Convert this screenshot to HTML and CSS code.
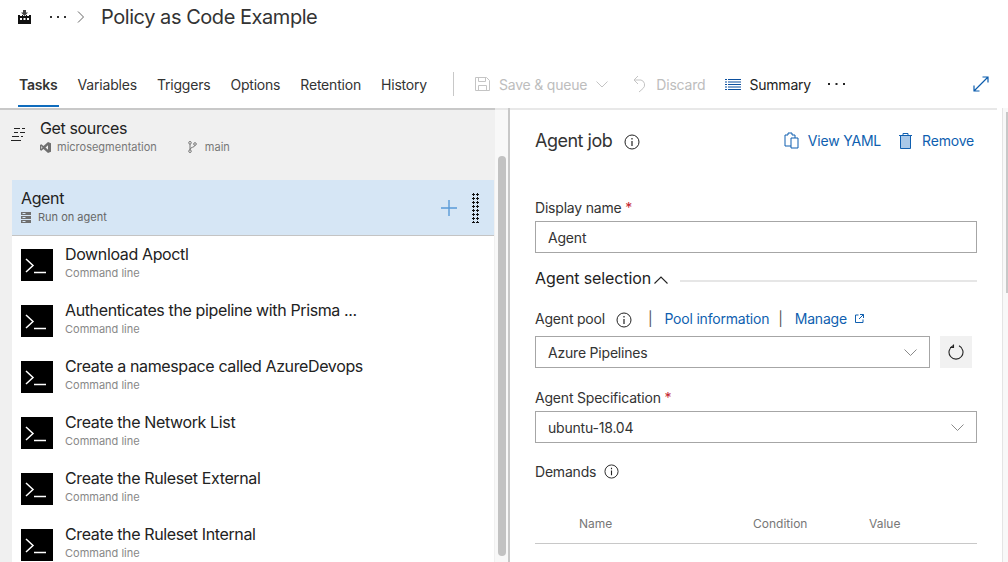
FILE: index.html
```html
<!DOCTYPE html>
<html lang="en">
<head>
    <meta charset="UTF-8">
    <title>Policy as Code Example</title>
    <link rel="stylesheet" href="styles.css">
</head>
<body>

<div class="crumbs">
    <svg class="org-icon" width="13" height="14" viewBox="0 0 13 14"><path d="M5 0h3v2.500h2L6.500 6 3 2.500h2z" fill="#444"/><path d="M0 5h2v1h2V5h1v1h3V5h1v1h2V5h2v9H0z" fill="#111"/><path d="M2 8h2v2H2zM5.500 8h2v2h-2zM9 8h2v2H9z" fill="#fff"/></svg>
    <svg class="crumb-dots" width="16" height="2" viewBox="0 0 16 2"><path d="M0 0h2v2H0zM7 0h2v2H7zM14 0h2v2h-2z" fill="#333"/></svg>
    <svg class="crumb-arrow" width="7" height="12" viewBox="0 0 7 12"><path d="M1 .5L6.500 6 1 11.500" fill="none" stroke="#666"/></svg>
    <h1 class="title">Policy as Code Example</h1>
</div>

<div class="tabbar">
    <a class="tab active">Tasks</a>
    <a class="tab">Variables</a>
    <a class="tab">Triggers</a>
    <a class="tab">Options</a>
    <a class="tab">Retention</a>
    <a class="tab">History</a>
    <div class="tab-sep"></div>
    <div class="cmd disabled save">
        <svg width="15" height="16" viewBox="0 0 15 16"><path d="M.5 1.500h11l3 3v10H.5zM3.500 1.500v4h7v-4M3.500 14.500v-5h8v5" fill="none" stroke="#c4c4c4"/></svg>
        <span>Save &amp; queue</span>
        <svg class="save-caret" width="12" height="7" viewBox="0 0 12 7"><path d="M.5.500l5.500 5.500L11.500.500" fill="none" stroke="#c4c4c4"/></svg>
    </div>
    <div class="cmd disabled discard">
        <svg width="14" height="18" viewBox="0 0 14 18"><path d="M5 1L1 5l4 4M1 5h7a5 5 0 0 1 2 8.500L6 17" fill="none" stroke="#c4c4c4"/></svg>
        <span>Discard</span>
    </div>
    <div class="cmd summary">
        <svg width="16" height="11" viewBox="0 0 16 11"><path d="M0 .500h2M3 .500h13M0 3h2M3 3h13M0 5.500h2M3 5.500h13M0 8h2M3 8h13M0 10.500h2M3 10.500h13" stroke="#0b4f9e" fill="none"/></svg>
        <span>Summary</span>
    </div>
    <svg class="more" width="17" height="2" viewBox="0 0 17 2"><path d="M0 0h2v2H0zM7.500 0h2v2h-2zM15 0h2v2h-2z" fill="#222"/></svg>
    <svg class="expand" width="16" height="16" viewBox="0 0 16 16"><path d="M1 15L15 1M9.500 1H15v5.500M1 9.500V15h5.500" fill="none" stroke="#0b5cad" stroke-width="1.200"/></svg>
</div>

<div class="main">
    <div class="left-pane">
        <div class="tasks">
            <div class="sources">
                <svg class="sources-icon" width="15" height="13" viewBox="0 0 15 13"><path d="M3 .500h6M11 .500h3M3 4.500h4M9 4.500h5M1 8.500h7M10 8.500h2M0 12.500h10" stroke="#222" fill="none"/></svg>
                <div>
                    <div class="task-name">Get sources</div>
                    <div class="sources-meta">
                        <svg width="11" height="11" viewBox="0 0 11 11"><path d="M8 0l3 1.300v8.400L8 11 3.500 7 1.300 8.700 0 8V3l1.300-.700L3.500 4zM8 3.300L5.500 5.500 8 7.700zM1.300 4v3l1.200-1.500z" fill="#6f6f6f" fill-rule="evenodd"/></svg>
                        <span class="repo">microsegmentation</span>
                        <svg width="9" height="12" viewBox="0 0 9 12"><g fill="none" stroke="#777"><circle cx="2" cy="1.800" r="1.300"/><circle cx="2" cy="10.200" r="1.300"/><circle cx="7" cy="3" r="1.300"/><path d="M2 3v6M7 4.300C7 6.500 2 6 2 8.500"/></g></svg>
                        <span>main</span>
                    </div>
                </div>
            </div>

            <div class="agent">
                <div class="agent-text">
                    <div class="task-name">Agent</div>
                    <div class="agent-sub">
                        <svg width="10" height="11" viewBox="0 0 10 11"><path d="M0 0h10v3H0zM0 4h10v3H0zM0 8h10v3H0z" fill="#6f6f6f"/><path d="M1.500 1h3v1h-3zM1.500 5h3v1h-3zM1.500 9h3v1h-3z" fill="#d6e6f5"/></svg>
                        <span>Run on agent</span>
                    </div>
                </div>
                <svg class="agent-plus" width="16" height="16" viewBox="0 0 16 16"><path d="M8 0v16M0 8h16" stroke="#5a9bd8" stroke-width="1.400"/></svg>
                <div class="grip"></div>
            </div>

            <div class="task">
                <svg class="cmd-icon" width="32" height="32" viewBox="0 0 32 32"><rect width="32" height="32" fill="#000"/><path d="M5 10l7 6.500L5 23" fill="none" stroke="#fff" stroke-width="1.500"/><path d="M13 23.500h12" stroke="#fff" stroke-width="1.500"/></svg>
                <div class="task-text"><div class="task-name">Download Apoctl</div><div class="task-sub">Command line</div></div>
            </div>
            <div class="task">
                <svg class="cmd-icon" width="32" height="32" viewBox="0 0 32 32"><rect width="32" height="32" fill="#000"/><path d="M5 10l7 6.500L5 23" fill="none" stroke="#fff" stroke-width="1.500"/><path d="M13 23.500h12" stroke="#fff" stroke-width="1.500"/></svg>
                <div class="task-text"><div class="task-name">Authenticates the pipeline with Prisma ...</div><div class="task-sub">Command line</div></div>
            </div>
            <div class="task">
                <svg class="cmd-icon" width="32" height="32" viewBox="0 0 32 32"><rect width="32" height="32" fill="#000"/><path d="M5 10l7 6.500L5 23" fill="none" stroke="#fff" stroke-width="1.500"/><path d="M13 23.500h12" stroke="#fff" stroke-width="1.500"/></svg>
                <div class="task-text"><div class="task-name">Create a namespace called AzureDevops</div><div class="task-sub">Command line</div></div>
            </div>
            <div class="task">
                <svg class="cmd-icon" width="32" height="32" viewBox="0 0 32 32"><rect width="32" height="32" fill="#000"/><path d="M5 10l7 6.500L5 23" fill="none" stroke="#fff" stroke-width="1.500"/><path d="M13 23.500h12" stroke="#fff" stroke-width="1.500"/></svg>
                <div class="task-text"><div class="task-name">Create the Network List</div><div class="task-sub">Command line</div></div>
            </div>
            <div class="task">
                <svg class="cmd-icon" width="32" height="32" viewBox="0 0 32 32"><rect width="32" height="32" fill="#000"/><path d="M5 10l7 6.500L5 23" fill="none" stroke="#fff" stroke-width="1.500"/><path d="M13 23.500h12" stroke="#fff" stroke-width="1.500"/></svg>
                <div class="task-text"><div class="task-name">Create the Ruleset External</div><div class="task-sub">Command line</div></div>
            </div>
            <div class="task">
                <svg class="cmd-icon" width="32" height="32" viewBox="0 0 32 32"><rect width="32" height="32" fill="#000"/><path d="M5 10l7 6.500L5 23" fill="none" stroke="#fff" stroke-width="1.500"/><path d="M13 23.500h12" stroke="#fff" stroke-width="1.500"/></svg>
                <div class="task-text"><div class="task-name">Create the Ruleset Internal</div><div class="task-sub">Command line</div></div>
            </div>
        </div>
        <div class="scroll-track"><div class="scroll-thumb"></div></div>
    </div>

    <div class="right-pane">
        <div class="job-head">
            <h2 class="job-title">Agent job</h2>
            <svg class="info job-info" width="16" height="16" viewBox="0 0 16 16"><circle cx="8" cy="8" r="7" fill="none" stroke="#222"/><path d="M8 7v5M8 4v1.500" stroke="#222" stroke-width="1.200"/></svg>
            <a class="job-link yaml">
                <svg width="15" height="17" viewBox="0 0 15 17"><path d="M1 3h3V1h4v2h3v3M7 6h7v10H7zM1 3v11h6" fill="none" stroke="#0f5fb0"/></svg>
                <span>View YAML</span>
            </a>
            <a class="job-link remove">
                <svg width="13" height="16" viewBox="0 0 13 16"><path d="M0 2.500h13M4 2.500V.500h5v2" fill="none" stroke="#0f5fb0"/><path d="M1.500 2.500h10v13h-10z" fill="#a9c8e8" stroke="#0f5fb0"/></svg>
                <span>Remove</span>
            </a>
        </div>

        <label class="field-label name-label">Display name <span class="req">*</span></label>
        <div class="input">Agent</div>

        <div class="section-head">
            <span class="section-name">Agent selection</span>
            <svg class="section-caret" width="14" height="8" viewBox="0 0 14 8"><path d="M.5 7.500L7 1l6.500 6.500" fill="none" stroke="#222" stroke-width="1.100"/></svg>
            <div class="section-rule"></div>
        </div>

        <div class="pool-row">
            <span class="field-label">Agent pool</span>
            <svg class="info pool-info" width="16" height="16" viewBox="0 0 16 16"><circle cx="8" cy="8" r="7" fill="none" stroke="#222"/><path d="M8 7v5M8 4v1.500" stroke="#222" stroke-width="1.200"/></svg>
            <span class="pipe first">|</span>
            <a class="pool-link">Pool information</a>
            <span class="pipe second">|</span>
            <a class="pool-link">Manage</a>
            <svg class="ext" width="9" height="9" viewBox="0 0 9 9"><path d="M3.500 1H.5v7.500H8V5.500M5 .5h3.500V4M8.500.5L4 5" fill="none" stroke="#0f5fb0"/></svg>
        </div>
        <div class="pool-select-row">
            <div class="input select pool-select">
                <span>Azure Pipelines</span>
                <svg width="13" height="7" viewBox="0 0 13 7"><path d="M.5.500l6 6 6-6" fill="none" stroke="#8a8a8a"/></svg>
            </div>
            <div class="refresh">
                <svg width="16" height="16" viewBox="0 0 16 16"><path d="M5 1.800A7 7 0 1 0 11 1.800M5.500 .5v3H2" fill="none" stroke="#222" stroke-width="1.100"/></svg>
            </div>
        </div>

        <label class="field-label spec-label">Agent Specification <span class="req">*</span></label>
        <div class="input select">
            <span>ubuntu-18.04</span>
            <svg width="13" height="7" viewBox="0 0 13 7"><path d="M.5.500l6 6 6-6" fill="none" stroke="#8a8a8a"/></svg>
        </div>

        <div class="demands">
            <span class="field-label">Demands</span>
            <svg class="info" width="15" height="15" viewBox="0 0 16 16"><circle cx="8" cy="8" r="7" fill="none" stroke="#222"/><path d="M8 7v5M8 4v1.500" stroke="#222" stroke-width="1.200"/></svg>
        </div>
        <div class="demand-table">
            <span class="col-name">Name</span>
            <span class="col-condition">Condition</span>
            <span>Value</span>
        </div>
    </div>
    <div class="right-scroll"><div class="right-thumb"></div></div>
</div>

</body>
</html>
```

FILE: styles.css
```css
* {
    box-sizing: border-box;
}
html, body {
    height: 100%;
    margin: 0;
    overflow: hidden;
}
body {
    font-family: Inter, "Liberation Sans", sans-serif;
    font-size: 14px;
    letter-spacing: -0.2px;
    color: #222;
    background: white;
}
svg {
    display: block;
    flex: none;
}

/* top */
.crumbs {
    height: 36px;
    display: flex;
    align-items: center;
    padding-left: 18px;
    padding-bottom: 2px;
}
.crumb-dots {
    margin-left: 19px;
}
.crumb-arrow {
    margin-left: 11px;
}
.title {
    margin: 0 0 0 17px;
    font-size: 20px;
    font-weight: 400;
    letter-spacing: -0.45px;
    color: #333;
}
.tabbar {
    height: 72px;
    display: flex;
    align-items: center;
    padding: 25px 0 1px 18px;
}
.tab {
    margin-right: 18px;
    padding: 0 1px;
    color: #333;
    height: 46px;
    line-height: 47px;
}
.tab.active {
    font-weight: 600;
    border-bottom: 2px solid #0f6cbd;
}
.tab-sep {
    width: 1px;
    height: 24px;
    background: #c8c8c8;
    margin: 0 21px 0 7px;
}
.cmd {
    display: flex;
    align-items: center;
    gap: 9px;
}
.cmd.disabled {
    color: #bdbdbd;
}
.discard {
    margin-left: 25px;
}
.summary {
    margin-left: 20px;
    gap: 8px;
    color: #222;
}
.more {
    margin-left: 17px;
}
.expand {
    margin-left: auto;
    margin-right: 19px;
}

/* left side */
.main {
    display: flex;
    height: 454px;
}
.left-pane {
    width: 510px;
    display: flex;
    background: #f0f0f0;
    border-right: 2px solid #c8c8c8;
}
.tasks {
    width: 495px;
    border-top: 2px solid #c8c8c8;
}
.sources {
    height: 70px;
    display: flex;
    padding: 9px 0 0 11px;
}
.sources-icon {
    margin: 9px 14px 0 0;
}
.task-name {
    font-size: 16px;
    line-height: 19px;
    letter-spacing: -0.37px;
    color: #222;
}
.sources-meta {
    display: flex;
    align-items: center;
    margin-top: 2px;
    font-size: 11px;
    letter-spacing: 0;
    color: #777;
}
.repo {
    margin: 0 31px 0 6px;
}
.sources-meta svg + span:last-child {
    margin-left: 8px;
}
.agent {
    margin: 0 1px 0 12px;
    height: 56px;
    background: #d6e6f5;
    border-bottom: 1px solid #c4c4c4;
    display: flex;
    align-items: center;
    padding-left: 9px;
}
.agent-text {
    flex: 1;
    margin-top: -2px;
}
.agent-sub {
    display: flex;
    align-items: center;
    gap: 7px;
    font-size: 11px;
    letter-spacing: 0;
    color: #666;
    margin-top: 2px;
}
.agent-plus {
    margin-right: 15px;
}
.grip {
    width: 8px;
    height: 30px;
    margin-right: 14px;
    background-image: radial-gradient(circle at 1.500px 1.500px, #111 1.300px, transparent 1.400px);
    background-size: 4px 4px;
}
.task {
    height: 56px;
    margin: 0 1px 0 12px;
    background: white;
    display: flex;
    padding-left: 9px;
}
.cmd-icon {
    margin: 13px 12px 0 0;
}
.task-text {
    margin-top: 9px;
}
.task-sub {
    font-size: 11px;
    letter-spacing: 0;
    color: #888;
    margin-top: 2px;
}
.scroll-track {
    width: 13px;
    background: #f8f8f8;
    border-top: 2px solid #e8e8e8;
    padding: 46px 2px 0 3px;
}
.scroll-thumb {
    height: 400px;
    width: 8px;
    background: #c2c2c2;
    border-radius: 4px;
}

/* right side */
.right-pane {
    width: 492px;
    padding: 0 25px;
    background: white;
}
.job-head {
    display: flex;
    align-items: center;
    height: 63px;
    margin: 0 -20px 0 -25px;
    padding: 0 23px 0 25px;
    border-top: 2px solid #e8e8e8;
}
.job-title {
    margin: 0;
    font-size: 18px;
    font-weight: 400;
    letter-spacing: -0.5px;
    color: #333;
}
.job-info {
    margin: 3px 0 0 12px;
}
.job-link {
    display: flex;
    align-items: center;
    gap: 9px;
    color: #0f5fb0;
}
.yaml {
    margin-left: auto;
}
.remove {
    margin-left: 18px;
    gap: 10px;
}
.field-label {
    color: #333;
}
.name-label {
    display: block;
    margin-top: 28px;
    line-height: 17px;
}
.req {
    color: #c4262e;
}
.input {
    height: 32px;
    border: 1px solid #a6a6a6;
    margin-top: 5px;
    padding: 0 12px;
    display: flex;
    align-items: center;
    color: #333;
}
.select {
    justify-content: space-between;
}
.section-head {
    display: flex;
    align-items: center;
    margin-top: 16px;
    height: 18px;
    font-size: 16px;
    letter-spacing: -0.1px;
    color: #222;
}
.section-name {
    margin-right: 3px;
}
.section-caret {
    margin-top: 3px;
}
.section-rule {
    flex: 1;
    height: 2px;
    background: #e6e6e6;
    margin-left: 12px;
    margin-top: 5px;
}
.pool-row {
    display: flex;
    align-items: center;
    margin-top: 23px;
    height: 17px;
}
.pool-info {
    margin: 2px 16px 0 11px;
}
.pipe {
    color: #555;
}
.pipe.first {
    margin-right: 12px;
}
.pipe.second {
    margin: 0 12px 0 9px;
}
.pool-link {
    color: #0f5fb0;
}
.ext {
    margin-left: 8px;
}
.pool-select-row {
    display: flex;
    gap: 10px;
    margin-top: 9px;
    padding-right: 5px;
}
.pool-select {
    flex: 1;
    margin-top: 0;
}
.refresh {
    width: 32px;
    height: 32px;
    background: #f1f1f1;
    display: flex;
    align-items: center;
    justify-content: center;
}
.spec-label {
    display: block;
    margin-top: 21px;
    line-height: 17px;
}
.demands {
    display: flex;
    align-items: center;
    gap: 8px;
    margin-top: 20px;
    height: 17px;
}
.demand-table {
    margin-top: 36px;
    display: flex;
    height: 28px;
    padding-left: 44px;
    border-bottom: 1px solid #c8c8c8;
    font-size: 12px;
    letter-spacing: 0;
    color: #777;
}
.col-name {
    width: 174px;
}
.col-condition {
    width: 116px;
}
.right-scroll {
    flex: 1;
    background: #f8f8f8;
    padding: 4px 0 0 3px;
    border-left: 1px solid #e4e4e4;
}
.right-thumb {
    height: 181px;
    background: #c8c8c8;
}
```
